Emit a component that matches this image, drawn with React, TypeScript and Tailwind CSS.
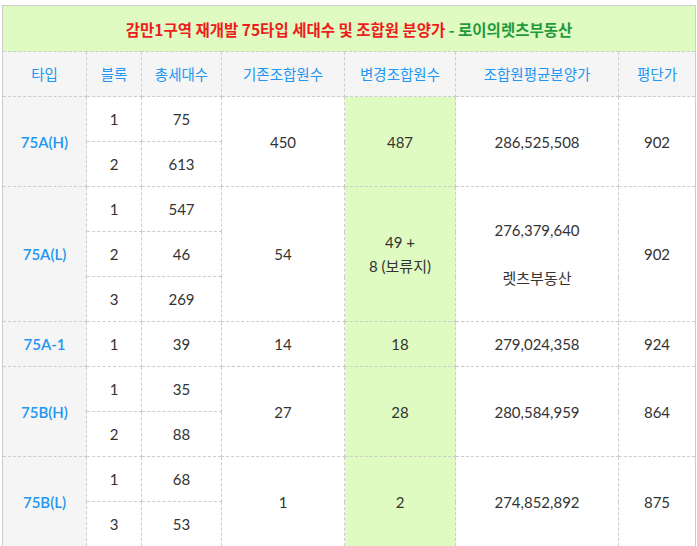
import React from 'react';

type Block = {
  type: string;
  subs: { block: string; total: string }[];
  before: React.ReactNode;
  after: React.ReactNode;
  price: React.ReactNode;
  perPyeong: string;
};

const blocks: Block[] = [
  {
    type: '75A(H)',
    subs: [
      { block: '1', total: '75' },
      { block: '2', total: '613' },
    ],
    before: '450',
    after: '487',
    price: '286,525,508',
    perPyeong: '902',
  },
  {
    type: '75A(L)',
    subs: [
      { block: '1', total: '547' },
      { block: '2', total: '46' },
      { block: '3', total: '269' },
    ],
    before: '54',
    after: (
      <>
        49 +
        <br />8 (보류지)
      </>
    ),
    price: (
      <>
        276,379,640
        <br />
        <br />
        렛츠부동산
      </>
    ),
    perPyeong: '902',
  },
  {
    type: '75A-1',
    subs: [{ block: '1', total: '39' }],
    before: '14',
    after: '18',
    price: '279,024,358',
    perPyeong: '924',
  },
  {
    type: '75B(H)',
    subs: [
      { block: '1', total: '35' },
      { block: '2', total: '88' },
    ],
    before: '27',
    after: '28',
    price: '280,584,959',
    perPyeong: '864',
  },
  {
    type: '75B(L)',
    subs: [
      { block: '1', total: '68' },
      { block: '3', total: '53' },
    ],
    before: '1',
    after: '2',
    price: '274,852,892',
    perPyeong: '875',
  },
];

const headers = ['타입', '블록', '총세대수', '기존조합원수', '변경조합원수', '조합원평균분양가', '평단가'];

const cell = 'border border-dashed border-[#cccccc] text-center align-middle p-0';

export default function App() {
  return (
    <div className="min-h-screen bg-white pt-[5px] pl-[2px] font-['Lato','Noto_Sans_CJK_KR',sans-serif] text-[15px] text-[#333333]">
      <table className="table-fixed border-collapse border border-solid border-[#cccccc] w-[693px] leading-6">
        <colgroup>
          <col className="w-[84px]" />
          <col className="w-[55px]" />
          <col className="w-[80px]" />
          <col className="w-[123px]" />
          <col className="w-[111px]" />
          <col className="w-[163px]" />
          <col className="w-[77px]" />
        </colgroup>
        <thead>
          <tr>
            <th
              colSpan={7}
              className="h-[46px] bg-[#dffbc1] border-b border-dashed border-[#cccccc] text-center font-bold font-['Noto_Sans_CJK_KR',sans-serif] text-[15.5px]"
            >
              <span className="text-[#ee1c1c]">감만1구역 재개발 75타입 세대수 및 조합원 분양가</span>
              <span className="text-[#1f9a3c]"> - 로이의렛츠부동산</span>
            </th>
          </tr>
          <tr>
            {headers.map((h) => (
              <th
                key={h}
                className={`${cell} h-[45px] bg-[#f5f5f5] font-normal text-[14.5px] text-[#2196f3] font-['Noto_Sans_CJK_KR',sans-serif]`}
              >
                {h}
              </th>
            ))}
          </tr>
        </thead>
        <tbody>
          {blocks.map((b) =>
            b.subs.map((s, i) => (
              <tr key={b.type + i}>
                {i === 0 && (
                  <td
                    rowSpan={b.subs.length}
                    className={`${cell} bg-[#f5f5f5] font-semibold text-[#2196f3]`}
                  >
                    {b.type}
                  </td>
                )}
                <td className={`${cell} h-[45px]`}>{s.block}</td>
                <td className={cell}>{s.total}</td>
                {i === 0 && (
                  <>
                    <td rowSpan={b.subs.length} className={cell}>
                      {b.before}
                    </td>
                    <td rowSpan={b.subs.length} className={`${cell} bg-[#dffbc1]`}>
                      {b.after}
                    </td>
                    <td rowSpan={b.subs.length} className={cell}>
                      {b.price}
                    </td>
                    <td rowSpan={b.subs.length} className={cell}>
                      {b.perPyeong}
                    </td>
                  </>
                )}
              </tr>
            ))
          )}
        </tbody>
      </table>
    </div>
  );
}
